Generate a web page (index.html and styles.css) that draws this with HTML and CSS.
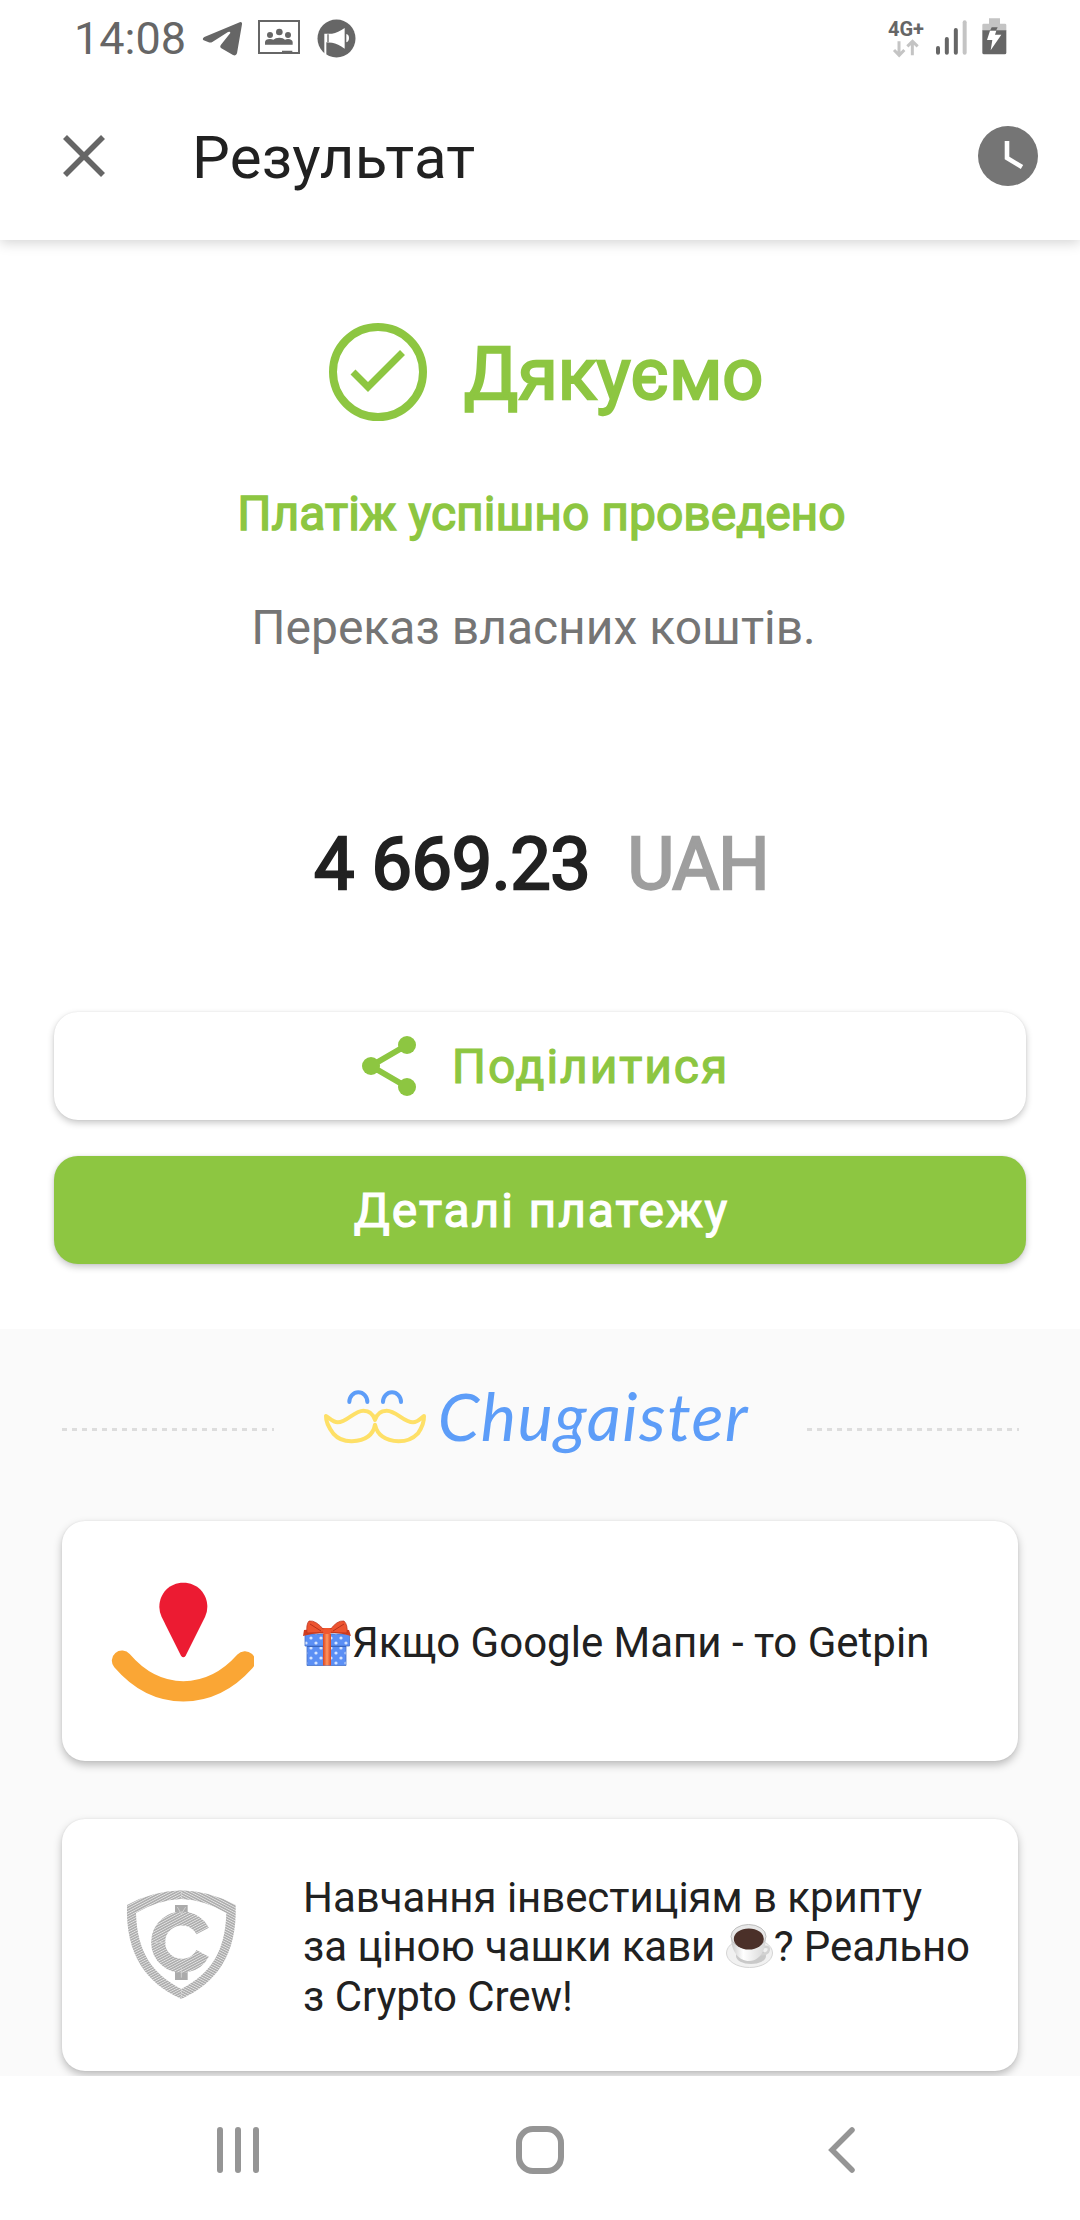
FILE: index.html
```html
<!DOCTYPE html>
<html lang="uk">
<head>
<meta charset="utf-8">
<title>Результат</title>
<link rel="stylesheet" href="styles.css">
</head>
<body>
<div class="status-bar">
  <span class="time">14:08</span>
  <svg class="icon-telegram" width="40" height="36" viewBox="456 60 120 108"><path d="M571 66Q577 66 576 73L561 160Q558 169 549 165L514 145Q508 140 513 134L541 99Q541 93 534 96L487 126Q482 129 476 127L461 121Q455 116 463 111Z" fill="#666"/></svg>
  <svg class="icon-class" width="42" height="34" viewBox="624 60 126 102" fill="#666"><path d="M624 60H750V162H624ZM630 66V156H696V152H727V156H744V66Z" fill-rule="evenodd"/><circle cx="688" cy="96" r="10"/><circle cx="660" cy="105" r="9"/><circle cx="714" cy="105" r="9"/><path d="M645 134V126Q646 117 660 117Q666 117 670 119Q676 113 688 113Q700 113 705 119Q709 117 714 117Q727 118 728 126V134Z"/></svg>
  <svg class="icon-horn" width="39" height="39" viewBox="801 54 117 117"><circle cx="859.500" cy="112.500" r="57" fill="#666"/><path d="M823 98H846Q864 95 884 81V143Q864 128 846 125L829 124V162H823Z" fill="#fff"/><path d="M834 100V123" stroke="#666" stroke-width="4"/><path d="M889 99Q897 101 897 111T889 124Z" fill="#fff"/></svg>
  <span class="net">4G+</span>
  <svg class="signals" width="120" height="39.333" viewBox="80 56 360 118">
    <path d="M116 126V168M101 152L116.500 168L132 152M156 168V127M141 141L156.500 126L172 141" fill="none" stroke="#c4c4c4" stroke-width="9"/>
    <path d="M233 146V160M259.500 119V160M286.500 92V160" stroke="#666" stroke-width="12" stroke-linecap="round"/>
    <path d="M313 69V160" stroke="#c4c4c4" stroke-width="12" stroke-linecap="round"/>
    <path d="M386 73V57H419V73H434Q438 73 438 77V94H366V77Q366 73 370 73Z" fill="#c4c4c4"/>
    <path d="M366 93H438V160Q438 165 433 165H371Q366 165 366 160Z" fill="#666"/>
    <path d="M394 84H412L407 94H389Z" fill="#666"/>
    <path d="M389 94H408L404 106H423L391 153L396 122H380Z" fill="#fff"/>
  </svg>
</div>
<header class="app-bar">
  <svg class="close" width="42" height="42" viewBox="0 0 42 42"><path d="M2 2L40 40M40 2L2 40" stroke="#666" stroke-width="5.600"/></svg>
  <h1>Результат</h1>
  <svg class="clock" width="60" height="60" viewBox="0 0 60 60"><circle cx="30" cy="30" r="30" fill="#757575"/><path d="M29 15V32L44 41" fill="none" stroke="#fff" stroke-width="4.600"/></svg>
</header>
<main class="result">
  <div class="thanks">
    <svg width="98" height="98" viewBox="0 0 98 98" fill="none" stroke="#8dc641"><circle cx="49" cy="49" r="45" stroke-width="8"/><path d="M24 49L39 64L73.500 29.500" stroke-width="7"/></svg>
    <span class="thanks-text">Дякуємо</span>
  </div>
  <p class="success">Платіж успішно проведено</p>
  <p class="note">Переказ власних коштів.</p>
  <div class="amount"><span class="sum">4 669.23</span><span class="currency">UAH</span></div>
  <div class="button share">
    <svg width="54" height="60" viewBox="0 0 54 60" fill="#8dc641"><path d="M45 9L9 30L45 51" fill="none" stroke="#8dc641" stroke-width="6"/><circle cx="45" cy="9" r="9"/><circle cx="9" cy="30" r="9"/><circle cx="45" cy="51" r="9"/></svg>
    <span>Поділитися</span>
  </div>
  <div class="button details"><span>Деталі платежу</span></div>
</main>
<section class="offers">
  <div class="brand">
    <i class="dash"></i>
    <svg width="480" height="130" viewBox="0 0 1440 390">
      <g fill="none" stroke-linecap="round" stroke-linejoin="round" stroke-width="12">
        <path d="M145 96A27 29 0 0 1 199 96M246 96A27 29 0 0 1 300 96" stroke="#5d9df8"/>
        <path d="M222 150Q214 122 187 122C160 122 138 157 110 157C94 156 85 143 75 138Q74 160 97 191Q118 215 153 214Q214 211 222 164Q232 211 293 214Q328 214 351 190Q370 162 369 138C360 143 352 156 336 157C308 157 286 122 257 122Q230 122 222 150Z" stroke="#fee067"/>
      </g>
      <text class="brand-name" x="410" y="213" textLength="930">Chugaister</text>
    </svg>
    <i class="dash"></i>
  </div>
  <article class="card">
    <svg width="144" height="128" viewBox="240 230 432 384"><path d="M276 481Q355 573 460 573T645 483" fill="none" stroke="#faa635" stroke-width="61" stroke-linecap="round"/><path d="M460 247C502 247 532 279 532 320Q532 335 525 350L467 466Q460 476 453 466L395 350Q388 335 388 320C388 279 418 247 460 247Z" fill="#ec1b32"/></svg>
    <p class="single"><svg class="gift" width="49" height="46" viewBox="0 0 49 46">
      <defs><linearGradient id="ribbon"><stop offset="0" stop-color="#d9441f"/><stop offset=".5" stop-color="#ff9560"/><stop offset="1" stop-color="#d9441f"/></linearGradient><pattern id="dots" width="10" height="10" patternUnits="userSpaceOnUse"><rect width="10" height="10" fill="#5b8ff5"/><circle cx="3" cy="3" r="1.600" fill="#d5e4ff"/><circle cx="8" cy="8" r="1.600" fill="#d5e4ff"/></pattern></defs>
      <path d="M4 24H43V45.500H4Z" fill="url(#dots)" stroke="#4672c8" stroke-width=".8"/><path d="M2 14H46.500V26H2Z" fill="url(#dots)" stroke="#4672c8" stroke-width=".8"/>
      <path d="M4 26.500H43" stroke="#3b66bd"/><path d="M20 14H28V45.500H20Z" fill="url(#ribbon)"/>
      <path d="M0 16L1 10L21 8H28L46 10L48 16Q32 11 24 14Q14 12 0 16Z" fill="#cf3d20"/>
      <path d="M21 10Q13 0 6 1Q3 4 4 13Q14 13 21 12ZM27 10Q34 0 41 1Q45 5 44 13Q35 13 27 12Z" fill="#ed5430" stroke="#b8311d" stroke-width=".7"/><path d="M7 4L18 11M41 4L30 11" stroke="#b8311d"/><rect x="20" y="8" width="8" height="6" rx="2" fill="#f0572f"/>
    </svg>Якщо Google Мапи - то Getpin</p>
  </article>
  <article class="card card-tall">
    <svg width="144" height="112" viewBox="240 270 432 336">
      <defs>
        <pattern id="hatchL" width="7" height="7" patternUnits="userSpaceOnUse" patternTransform="rotate(62)"><rect width="7" height="7" fill="#adadad"/><rect width="2.400" height="7" fill="#e4e4e4"/></pattern>
        <pattern id="hatchR" width="7" height="7" patternUnits="userSpaceOnUse" patternTransform="rotate(-62)"><rect width="7" height="7" fill="#adadad"/><rect width="2.400" height="7" fill="#e4e4e4"/></pattern>
      </defs>
      <path d="M454 274Q368 276 291 318C286 470 350 552 454 600V570C365 522 322 460 318 342Q380 304 454 300Z" fill="url(#hatchL)"/>
      <path d="M454 274Q540 276 617 318C622 470 558 552 454 600V570C543 522 585 460 589 342Q528 304 454 300Z" fill="url(#hatchR)"/>
      <path d="M435 318H473V360H435ZM435 500H473V543H435Z" fill="#ababab"/>
      <path d="M518 396A71 71 0 1 0 518 463" fill="none" stroke="url(#hatchL)" stroke-width="42"/>
      <path d="M442 324L454 345L467 324M454 508V536M366 430H408" fill="none" stroke="#cfcfcf" stroke-width="3"/>
    </svg>
    <p>Навчання інвестиціям в крипту<br>за ціною чашки кави <svg class="cup" width="47" height="44" viewBox="0 0 47 44">
      <defs><linearGradient id="china"><stop offset="0" stop-color="#c9c9c9"/><stop offset=".35" stop-color="#fff"/><stop offset="1" stop-color="#d6d6d6"/></linearGradient></defs>
      <ellipse cx="23.500" cy="29" rx="23" ry="14.500" fill="#f1f1f1" stroke="#d4d4d4"/><ellipse cx="25" cy="32" rx="15" ry="8" fill="#c9c9c9"/>
      <path d="M38 23Q45 22 42 28Q39 31 34 30" fill="none" stroke="#d2d2d2" stroke-width="2.500"/>
      <path d="M5 12C5 28 13 37 23 37S40 28 40 12Z" fill="url(#china)"/><ellipse cx="22.500" cy="12.500" rx="17.500" ry="12" fill="#e8e8e8" stroke="#bdbdbd"/><ellipse cx="22.800" cy="15" rx="15" ry="10.500" fill="#4b3029"/>
    </svg>? Реально<br>з Crypto Crew!</p>
  </article>
</section>
<nav class="nav-bar">
  <svg width="42" height="46" viewBox="0 0 42 46"><path d="M3 3V43M21 3V43M39 3V43" stroke="#959595" stroke-width="6" stroke-linecap="round"/></svg>
  <svg class="home" width="48" height="48" viewBox="0 0 48 48"><rect x="3" y="3" width="42" height="42" rx="14" fill="none" stroke="#959595" stroke-width="6"/></svg>
  <svg width="27" height="46" viewBox="0 0 27 46"><path d="M24 3L4 23L24 43" fill="none" stroke="#959595" stroke-width="5.500" stroke-linecap="round"/></svg>
</nav>
</body>
</html>
```
FILE: styles.css
```css
* { box-sizing: border-box; }
body {
  margin: 0;
  width: 1080px;
  height: 2220px;
  overflow: hidden;
  display: flex;
  flex-direction: column;
  background: #fff;
  color: #212121;
  font-family: Roboto, "Liberation Sans", sans-serif;
}
h1, p { margin: 0; font-weight: 400; }
svg { flex: none; }

.status-bar {
  height: 76px;
  padding: 0 73px 0 74px;
  display: flex;
  align-items: center;
}
.time { font-size: 45px; line-height: 53px; color: #666; }
.icon-telegram, .icon-class { margin-left: 16px; }
.icon-class { margin-bottom: 2px; }
.icon-horn { margin-left: 17px; }
.net {
  margin: 0 -37px 19px auto;
  font-size: 20px;
  font-weight: 700;
  line-height: 24px;
  color: #666;
}

.app-bar {
  height: 164px;
  padding: 0 42px 0 63px;
  display: flex;
  align-items: center;
  box-shadow: 0 3px 12px rgba(0, 0, 0, .17);
  clip-path: inset(0 0 -24px 0);
}
.close, .clock { margin-bottom: 4px; }
.app-bar h1 {
  flex: 1;
  margin-left: 87px;
  font-size: 60px;
  line-height: 70px;
  letter-spacing: .2px;
}

.result {
  height: 1089px;
  padding: 83px 54px 0;
  display: flex;
  flex-direction: column;
}
.thanks {
  height: 98px;
  padding-left: 275px;
  display: flex;
  align-items: center;
  gap: 37px;
}
.thanks-text {
  padding-top: 5px;
  font-size: 72px;
  line-height: 88px;
  color: #8dc641;
  -webkit-text-stroke: 2.3px #8dc641;
}
.success {
  margin-top: 65px;
  padding-left: 3px;
  font-size: 48px;
  line-height: 56px;
  text-align: center;
  color: #8dc641;
  -webkit-text-stroke: 1.5px #8dc641;
}
.note {
  margin-top: 58px;
  padding-right: 13px;
  font-size: 48px;
  line-height: 56px;
  text-align: center;
  color: #757575;
}
.amount {
  margin: 165px 0 103px;
  padding-left: 260px;
  display: flex;
  gap: 37px;
  font-size: 72px;
  line-height: 88px;
  letter-spacing: -.4px;
  -webkit-text-stroke: 2.3px;
}
.currency { letter-spacing: -1px; color: #9e9e9e; }
.button {
  height: 108px;
  border-radius: 24px;
  display: flex;
  align-items: center;
  justify-content: center;
  gap: 36px;
  font-size: 48px;
  line-height: 56px;
  letter-spacing: 1.9px;
  -webkit-text-stroke: 1.2px;
  box-shadow: 0 3px 7px rgba(0, 0, 0, .22), 0 0 2px rgba(0, 0, 0, .08);
}
.share { color: #8dc641; padding-left: 11px; }
.details { margin-top: 36px; background: #8dc641; color: #fff; padding-left: 3px; }
.button span { padding-top: 1px; }

.offers {
  height: 747px;
  padding: 0 62px;
  overflow: hidden;
  background: #fafafa;
}
.brand {
  height: 192px;
  margin-right: -1px;
  display: flex;
  align-items: center;
  justify-content: space-between;
}
.brand svg { margin: 20px -24px 0; }
.brand-name { font: italic 400 200px Lato, sans-serif; fill: #5d9df8; }
.dash {
  width: 212px;
  height: 3px;
  margin-top: 8px;
  background: repeating-linear-gradient(90deg, #ddd 0 5px, transparent 5px 10px);
}
.card {
  height: 240px;
  padding-left: 48px;
  display: flex;
  align-items: center;
  gap: 49px;
  border-radius: 23px;
  background: #fff;
  box-shadow: 0 4px 8px rgba(0, 0, 0, .25), 0 0 2px rgba(0, 0, 0, .08);
}
.card p {
  padding-top: 4px;
  font-size: 42px;
  line-height: 49.5px;
  letter-spacing: -.06px;
  white-space: nowrap;
}
.card .single { letter-spacing: 0; }
.card-tall { height: 252px; margin-top: 58px; }
.gift { margin-top: -10px; vertical-align: -9px; }
.cup { margin: -10px 1px 0 0; vertical-align: -7px; }

.nav-bar {
  height: 144px;
  padding: 3px 225px 0 217px;
  display: flex;
  align-items: center;
  justify-content: space-between;
}
.home { margin-right: 8px; }
```
